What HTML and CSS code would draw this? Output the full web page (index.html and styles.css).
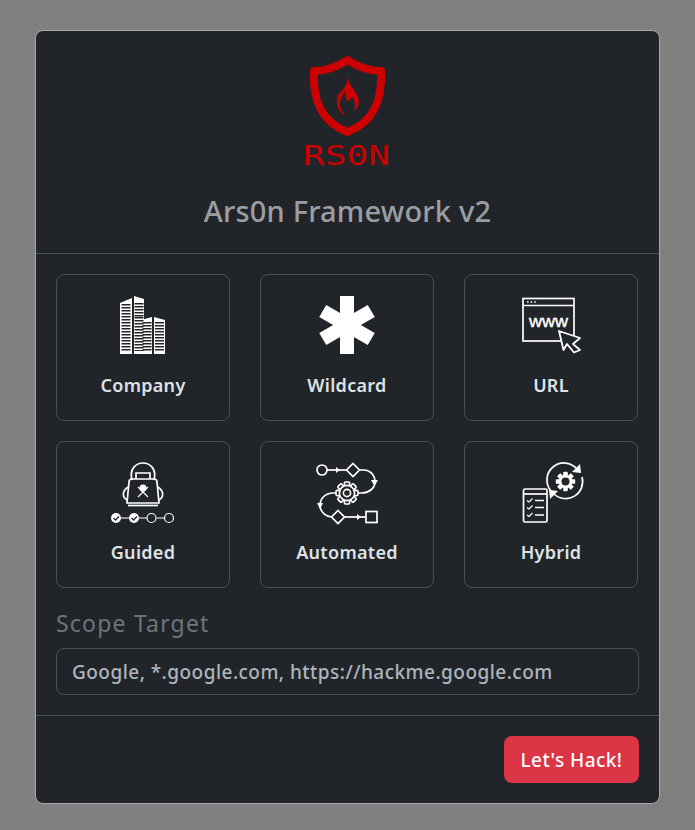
FILE: index.html
```html
<!DOCTYPE HTML>
<html>

<head>
  <meta charset="utf-8">
  <title>Ars0n Framework v2</title>
  <link rel="stylesheet" href="styles.css">
</head>

<body>
  <svg class="defs" width="0" height="0">
    <defs>
      <g id="teeth">
        <rect x="-2.6" y="-11" width="5.2" height="5" rx="1" />
        <rect x="-2.6" y="-11" width="5.2" height="5" rx="1" transform="rotate(45)" />
        <rect x="-2.6" y="-11" width="5.2" height="5" rx="1" transform="rotate(90)" />
        <rect x="-2.6" y="-11" width="5.2" height="5" rx="1" transform="rotate(135)" />
        <rect x="-2.6" y="-11" width="5.2" height="5" rx="1" transform="rotate(180)" />
        <rect x="-2.6" y="-11" width="5.2" height="5" rx="1" transform="rotate(225)" />
        <rect x="-2.6" y="-11" width="5.2" height="5" rx="1" transform="rotate(270)" />
        <rect x="-2.6" y="-11" width="5.2" height="5" rx="1" transform="rotate(315)" />
      </g>
    </defs>
  </svg>

  <div class="modal">
    <div class="modal-header">
      <svg class="logo" width="100" height="120" viewBox="298 52 100 120">
        <path class="shield" d="M347.500 60 C337 67 325 71 314 71 C313 92 316 120 347.500 132 C379 120 382 92 381 71 C370 71 358 67 347.500 60 Z" />
        <path class="flame" d="M348 77 C349 85 353 88 356 93 C360 99 360 107 354 111 C356 106 355 100 351 96 C351 100 349 102 347 100 C345 98 346 93 345 91 C343 96 339 100 340 106 C341 110 343 113 346 116 C340 113 336 107 337 100 C337 94 341 92 344 88 C346 85 348 82 348 77 Z" />
        <text class="logo-text" x="303" y="165" textLength="87" lengthAdjust="spacingAndGlyphs">RS0N</text>
      </svg>
      <h1 class="title">Ars0n Framework v2</h1>
    </div>

    <div class="modal-body">
      <div class="cards">
        <div class="card">
          <svg class="icon" width="64" height="62" viewBox="111 295 64 62">
            <path class="solid" d="M120 304 L132 299 L132 355 L120 355 Z M134 297 L144 300 L144 355 L134 355 Z" />
            <path class="solid" d="M141 321 L152 318 L152 355 L141 355 Z M154 318 L165 321 L165 355 L154 355 Z" />
            <path class="floors" d="M126 305 V352 M139 304 V318 M147 323 V352 M159.500 323 V352" />
            <path class="floors" d="M139 318 V352" />
          </svg>
          <span class="label">Company</span>
        </div>
        <div class="card">
          <svg class="icon" width="64" height="62" viewBox="315 295 64 62">
            <rect class="star" x="340" y="297" width="14" height="58" />
            <rect class="star" x="340" y="298" width="14" height="56" transform="rotate(60 347 326)" />
            <rect class="star" x="340" y="298" width="14" height="56" transform="rotate(120 347 326)" />
          </svg>
          <span class="label">Wildcard</span>
        </div>
        <div class="card">
          <svg class="icon" width="64" height="62" viewBox="519 295 64 62">
            <rect class="line" x="523" y="299.500" width="51" height="42.500" />
            <path class="line" d="M523 306.500 H574" />
            <path class="dots" d="M527 303 H536" />
            <text class="www" x="529" y="328" textLength="39" lengthAdjust="spacingAndGlyphs">www</text>
            <path class="cursor" d="M559 332 L580 339 L573 345 L580 351 L574 353.500 L567 345 L563.500 351 Z" />
          </svg>
          <span class="label">URL</span>
        </div>
        <div class="card">
          <svg class="icon" width="64" height="62" viewBox="111 461 64 62">
            <path class="line" d="M132 480 C129 469 136 463 143 463 C150 463 157 469 154 480" />
            <path class="line" d="M136 479 V473 H150 V479" />
            <path class="line" d="M129 482 C129 480 130 479 132 479 H154 C156 479 157 480 157 482 L159 503 H127 Z" />
            <path class="line" d="M128 487 C122 491 122 497 127 500 M158 487 C164 491 164 497 159 500" />
            <path class="line" d="M128 505.500 H158" />
            <circle class="skull" cx="143" cy="488" r="3.500" />
            <path class="line-thin" d="M138 487 L148 497 M148 487 L138 497" />
            <path class="line-thin" d="M121 518 H129 M139 518 H147 M157 518 H164" />
            <circle class="fill-dot" cx="116" cy="518" r="5" />
            <circle class="fill-dot" cx="134" cy="518" r="5" />
            <path class="check" d="M113.500 518 L115.500 520 L119 516.500 M131.500 518 L133.500 520 L137 516.500" />
            <circle class="line-thin" cx="151.500" cy="518" r="4.500" />
            <circle class="line-thin" cx="169" cy="518" r="4.500" />
          </svg>
          <span class="label">Guided</span>
        </div>
        <div class="card">
          <svg class="icon" width="64" height="62" viewBox="315 461 64 62">
            <circle class="line" cx="322" cy="470" r="5" />
            <path class="line" d="M327 470 H347" />
            <path class="arrow" d="M336 467 L340 470 L336 473 Z" />
            <path class="line-dark" d="M353 463.500 L359.500 470 L353 476.500 L346.500 470 Z" />
            <path class="line" d="M359.500 470 H364 C370 470 375 475 375 482 C375 488 369 493 362 493 H358" />
            <path class="arrow" d="M371 480 H378 L374.500 486 Z" />
            <g class="gear-outline" transform="translate(347 493)">
              <use href="#teeth" />
              <circle r="7.600" />
              <circle r="3.600" />
            </g>
            <path class="line" d="M336 493 H333 C325 493 320 499 320 505 C320 512 326 517 333 517" />
            <path class="arrow" d="M317 503 L323 503 L320 509 Z" />
            <path class="line-dark" d="M338 510.500 L344.500 517 L338 523.500 L331.500 517 Z" />
            <path class="line" d="M344.500 517 H365" />
            <path class="arrow" d="M357 514 L361 517 L357 520 Z" />
            <rect class="line" x="366" y="511.500" width="11" height="11" />
          </svg>
          <span class="label">Automated</span>
        </div>
        <div class="card">
          <svg class="icon" width="64" height="62" viewBox="519 461 64 62">
            <path class="line" d="M551 491 A17 17 0 0 1 577 469" />
            <path class="line" d="M582 477 A17 17 0 0 1 554 494" />
            <path class="arrow" d="M581 473 L580 464 L572 472 Z" />
            <path class="arrow" d="M549 490 L550 499 L558 491 Z" />
            <g class="gear-solid" transform="translate(565.500 481.500) scale(.88)">
              <use href="#teeth" />
              <circle r="7.500" />
            </g>
            <circle class="gear-hole" cx="565.500" cy="481.500" r="4" />
            <rect class="line" x="523.500" y="489" width="23.500" height="33" rx="1.500" />
            <path class="line" d="M523.500 494 H547" />
            <path class="line-thin" d="M527 500.500 L529 502 L532.500 498.500 M527 507.500 L529 509 L532.500 505.500 M527 515 L529 516.500 L532.500 513" />
            <path class="line" d="M535 500.500 H544 M535 507.500 H544 M535 515 H544" />
          </svg>
          <span class="label">Hybrid</span>
        </div>
      </div>

      <label class="scope-label" for="scope">Scope Target</label>
      <input class="scope-input" id="scope" type="text" placeholder="Google, *.google.com, https://hackme.google.com">
    </div>

    <div class="modal-footer">
      <button class="hack-btn">Let's Hack!</button>
    </div>
  </div>
</body>

</html>
```

FILE: styles.css
```css
* {
  margin: 0;
  padding: 0;
  box-sizing: border-box;
}

body {
  background: #808080;
  font-family: "Noto Sans", sans-serif;
  height: 830px;
  overflow: hidden;
}

.defs {
  position: absolute;
}

.modal {
  width: 625px;
  margin: 30px 0 0 35px;
  background: #212529;
  border: 1px solid #a6a8aa;
  border-radius: 8px;
  overflow: hidden;
}

.modal-header {
  height: 223px;
  border-bottom: 1px solid #495057;
  display: flex;
  flex-direction: column;
  align-items: center;
  padding-top: 21px;
}

.logo {
  display: block;
  fill: #cc0000;
}

.shield {
  fill: none;
  stroke: #cc0000;
  stroke-width: 8;
  stroke-linejoin: round;
}

.logo-text {
  font-family: "DejaVu Sans Mono", monospace;
  font-size: 26px;
  fill: #cc0000;
}

.title {
  font-size: 29px;
  font-weight: 500;
  color: #9a9ea2;
  line-height: 36px;
  margin-top: 21px;
  letter-spacing: 0.2px;
}

.modal-body {
  padding: 20px;
  border-bottom: 1px solid #495057;
}

.cards {
  display: grid;
  grid-template-columns: repeat(3, 174px);
  column-gap: 30px;
  row-gap: 20px;
}

.card {
  height: 147px;
  border: 1px solid #495057;
  border-radius: 8px;
  display: flex;
  flex-direction: column;
  align-items: center;
  padding-top: 19px;
}

.icon {
  display: block;
  fill: none;
  overflow: visible;
}

.label {
  font-size: 18px;
  font-weight: 600;
  color: #dee2e6;
  line-height: 24px;
  margin-top: 17px;
  letter-spacing: 0.3px;
}

/* icon parts */
.solid {
  fill: #fff;
}

.floors {
  fill: none;
  stroke: #212529;
  stroke-width: 9;
  stroke-dasharray: 1.4 1.6;
}

.star {
  fill: #fff;
}

.line {
  fill: none;
  stroke: #fff;
  stroke-width: 1.7;
}

.line-thin {
  fill: none;
  stroke: #fff;
  stroke-width: 1.2;
}

.line-dark {
  fill: #212529;
  stroke: #fff;
  stroke-width: 1.7;
}

.gear-outline {
  fill: #212529;
  stroke: #fff;
  stroke-width: 1.6;
}

.gear-solid {
  fill: #fff;
}

.gear-hole {
  fill: #212529;
}

.dots {
  fill: none;
  stroke: #fff;
  stroke-width: 1.6;
  stroke-dasharray: 1.6 2;
}

.www {
  font-family: "Liberation Sans", sans-serif;
  font-size: 17px;
  font-weight: 400;
  fill: #fff;
  stroke: #fff;
  stroke-width: 0.4;
}

.cursor {
  fill: #212529;
  stroke: #fff;
  stroke-width: 1.8;
  stroke-linejoin: round;
}

.arrow {
  fill: #fff;
}

.fill-dot {
  fill: #fff;
}

.check {
  fill: none;
  stroke: #212529;
  stroke-width: 1.3;
}

.skull {
  fill: #fff;
}

.scope-label {
  display: block;
  font-size: 23px;
  color: #6c757d;
  line-height: 30px;
  margin-top: 20px;
  letter-spacing: 1.2px;
}

.scope-input {
  display: block;
  width: 583px;
  height: 47px;
  margin-top: 10px;
  padding: 0 15px;
  background: #212529;
  border: 1px solid #495057;
  border-radius: 8px;
  font-family: inherit;
  font-size: 19px;
  font-weight: 500;
  letter-spacing: 0.47px;
  outline: none;
}

.scope-input::placeholder {
  color: #adb5bd;
  opacity: 1;
}

.modal-footer {
  height: 87px;
  display: flex;
  justify-content: flex-end;
  padding: 20px;
}

.hack-btn {
  width: 135px;
  height: 47px;
  background: #dc3545;
  color: #fff;
  border: none;
  border-radius: 8px;
  font-family: inherit;
  font-size: 19px;
  font-weight: 500;
  letter-spacing: 0.45px;
}
```
